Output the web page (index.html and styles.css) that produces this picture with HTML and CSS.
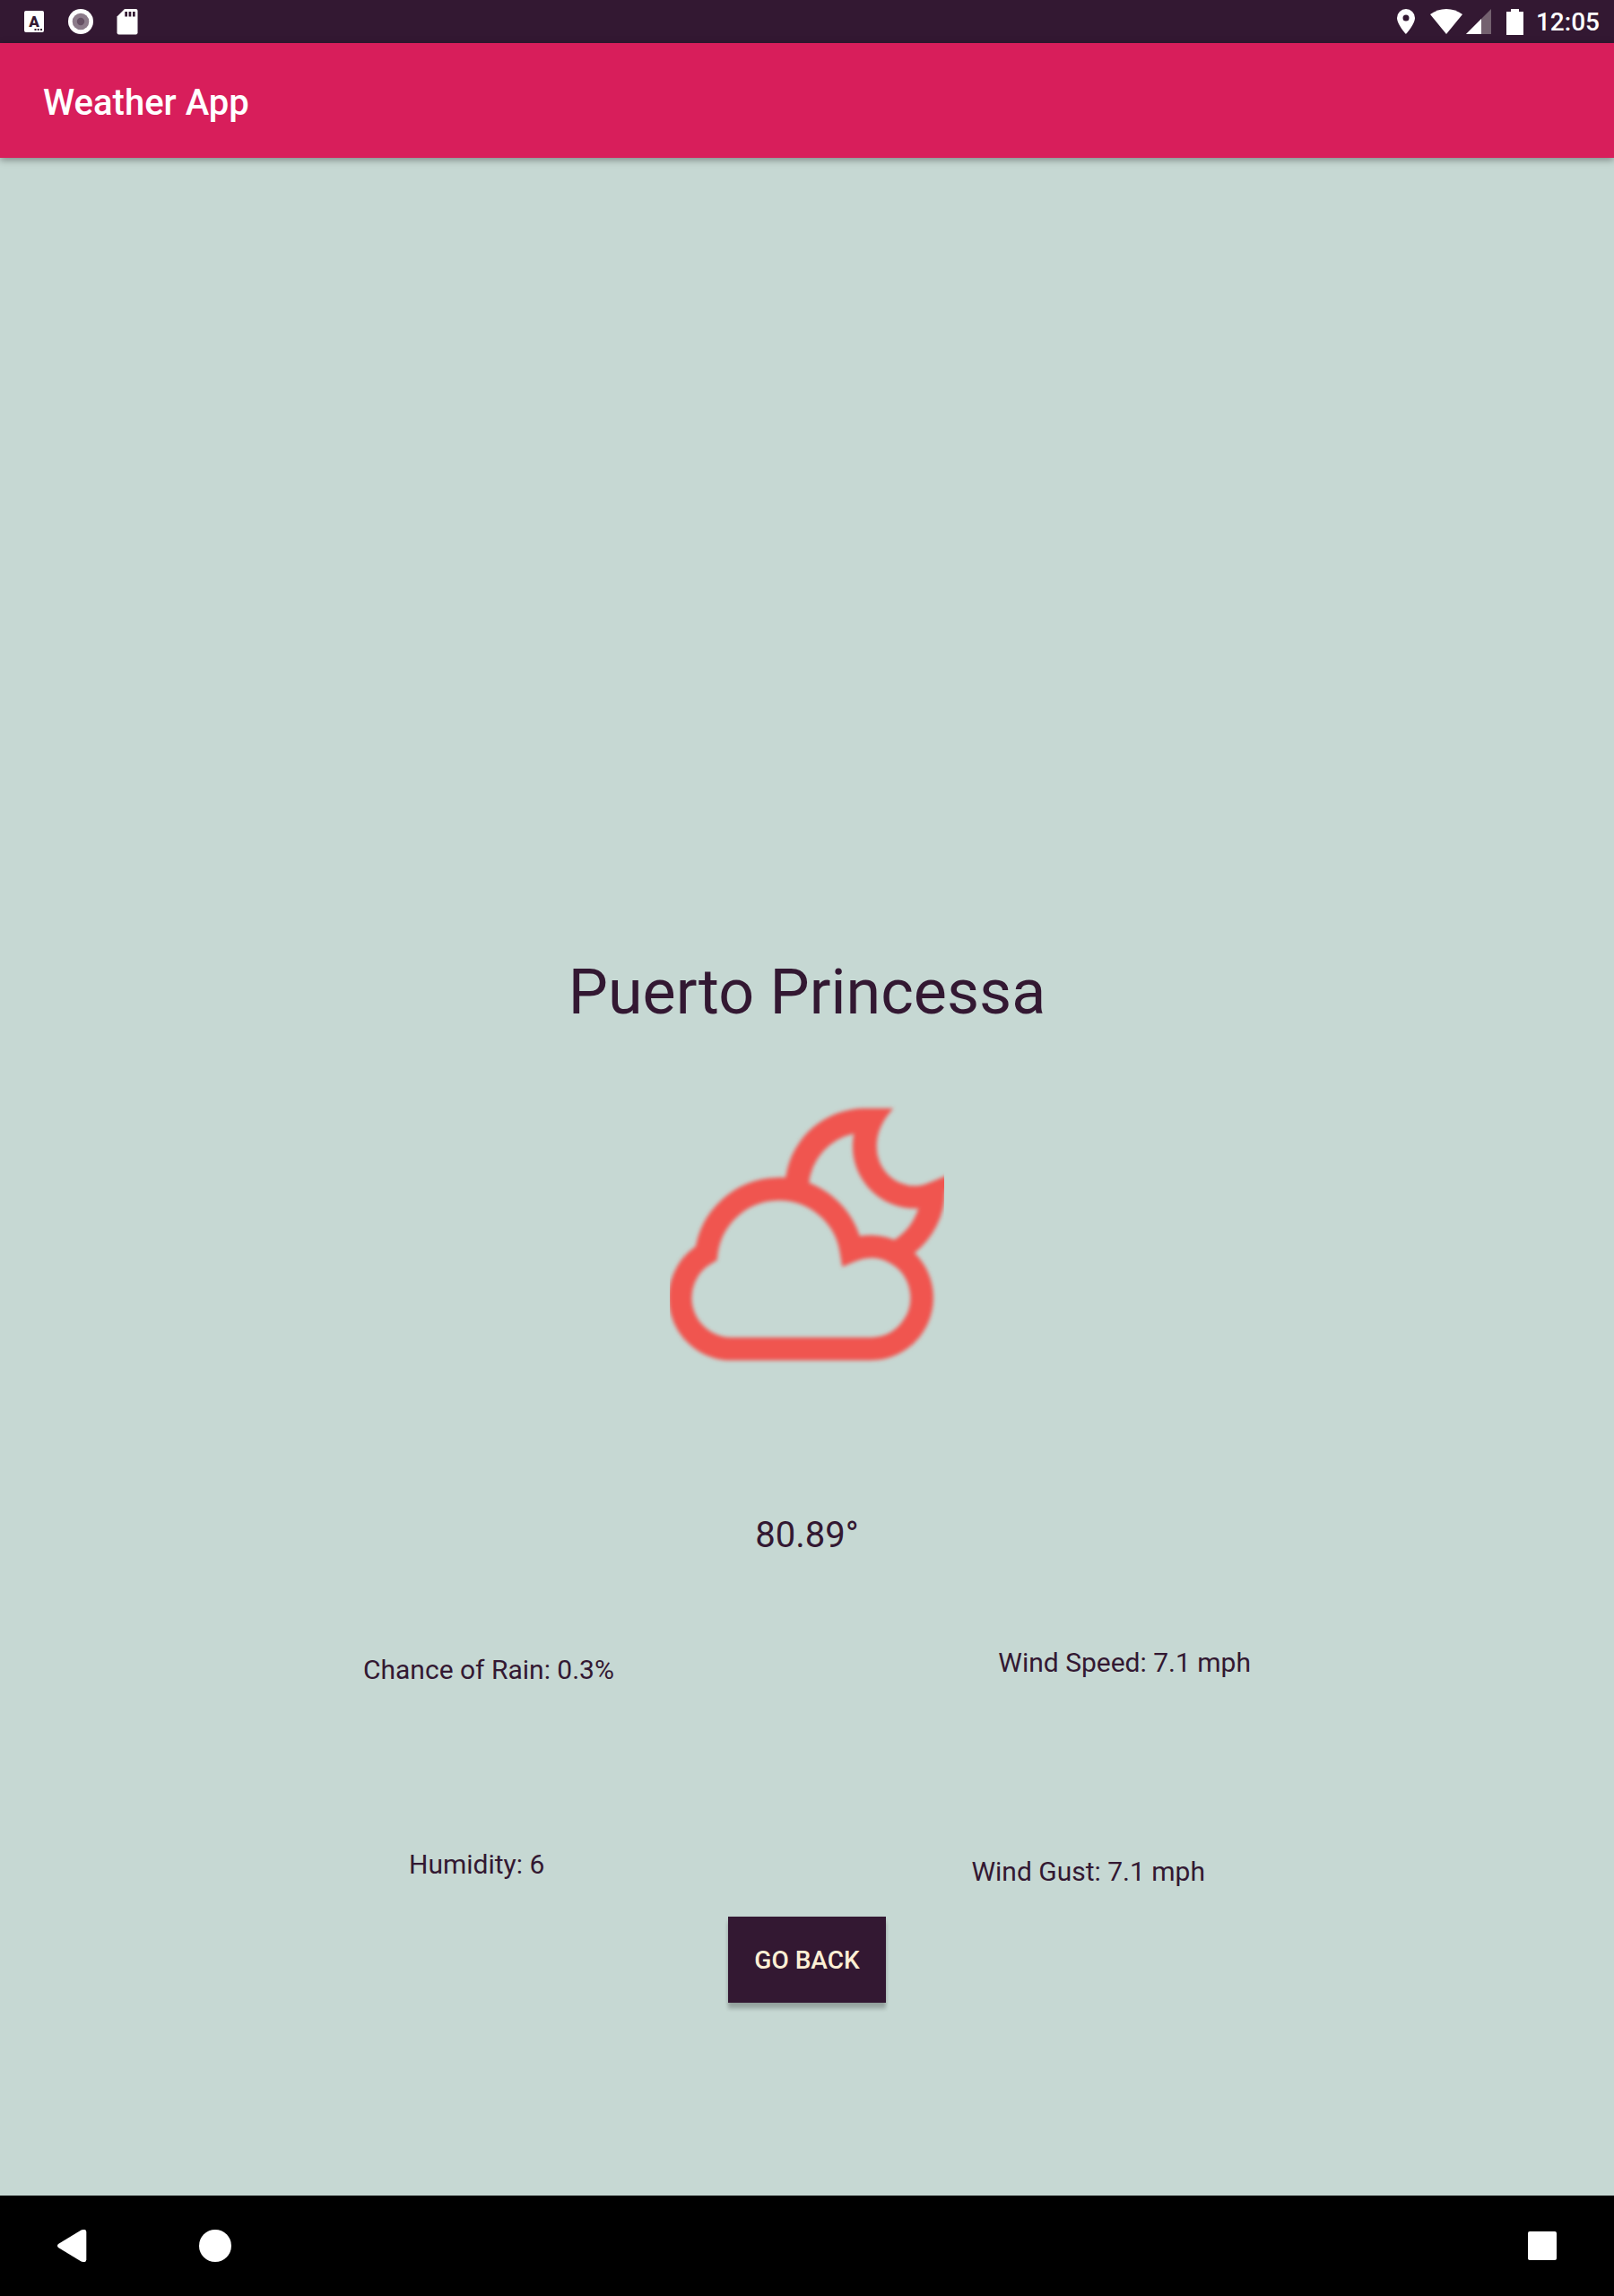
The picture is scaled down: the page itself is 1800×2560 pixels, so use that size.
FILE: index.html
```html
<!DOCTYPE html>
<html lang="en">
<head>
<meta charset="utf-8">
<meta name="viewport" content="width=device-width, initial-scale=1">
<title>Weather App</title>
<link rel="stylesheet" href="styles.css">
</head>
<body class="screen">
  <div class="status-bar">
    <div class="status-group status-notifications">
      <svg class="status-icon" width="28" height="28" viewBox="0 0 28 28" aria-hidden="true">
        <rect x="3" y="2" width="22" height="24" rx="2" fill="#fff"/>
        <text class="keyboard-letter" x="14" y="20" text-anchor="middle">A</text>
        <path d="M14.500 22h2v2h-2zM17.700 22h2v2h-2zM21 22h2v2h-2z" fill="#331832"/>
      </svg>
      <svg class="status-icon" width="28" height="28" viewBox="0 0 28 28" aria-hidden="true">
        <circle cx="14" cy="14" r="14" fill="#fff"/>
        <circle cx="14" cy="14" r="9.300" fill="#8c7b8a"/>
        <circle cx="14" cy="14" r="4.200" fill="#665064"/>
      </svg>
      <svg class="status-icon" width="28" height="30" viewBox="-2 0 28 30" aria-hidden="true">
        <path d="M9 1h12.500A2 2 0 0 1 23.500 3v24.500a2 2 0 0 1-2 2h-19a2 2 0 0 1-2-2V9.500z" fill="#fff"/>
        <path d="M9.300 4h2.700v5.500H9.300zM13.600 4h2.700v5.500h-2.700zM18 4h2.700v5.500H18z" fill="#331832"/>
      </svg>
    </div>
    <div class="status-group">
      <svg class="status-icon status-location" width="20" height="28" viewBox="0 0 20 28" aria-hidden="true">
        <path fill="#fff" fill-rule="evenodd" d="M10 0A10 10 0 0 0 0 10C0 17 10 28 10 28S20 17 20 10A10 10 0 0 0 10 0zM10 6.400a3.500 3.500 0 1 1 0 7 3.500 3.500 0 0 1 0-7z"/>
      </svg>
      <svg class="status-icon" width="36" height="28" viewBox="0 0 36 28" aria-hidden="true">
        <path fill="#fff" d="M18 28L0 6Q8 0 18 0T36 6z"/>
      </svg>
      <svg class="status-icon status-signal" width="28" height="28" viewBox="0 0 28 28" aria-hidden="true">
        <path fill="#74616f" d="M28 0V28H0z"/>
        <path fill="#fff" d="M17 11V28H0z"/>
      </svg>
      <svg class="status-icon status-battery" width="19" height="29" viewBox="0 0 19 29" aria-hidden="true">
        <path fill="#fff" d="M5 0h9v3h5v26H0V3h5z"/>
      </svg>
      <time class="clock">12:05</time>
    </div>
  </div>

  <header class="app-bar">
    <h1 class="app-title">Weather App</h1>
  </header>

  <main class="weather">
    <h2 class="city">Puerto Princessa</h2>
    <svg class="condition" viewBox="48 34 918 918" role="img" aria-label="Cloudy night">
      <defs>
        <filter id="soften"><feGaussianBlur stdDeviation="6"/></filter>
      </defs>
      <g filter="url(#soften)">
        <path fill="#f0544f" d="M430 330Q433 315 437 298A268 268 0 0 1 700 75H796C760 115 740 155 740 203A130 130 0 0 0 870 335C905 335 935 312 1000 292L969 355A268 268 0 0 1 868 558L820 560 800 515A195 195 0 0 0 880 410A208 208 0 0 1 664 160A190 190 0 0 0 513 330L480 350z"/>
        <path fill="none" stroke="#f0544f" stroke-width="77" d="M256 880H722A171 171 0 1 0 655 551A245 245 0 0 0 170 560A171 171 0 0 0 256 880z"/>
      </g>
    </svg>
    <p class="temperature">80.89°</p>
    <div class="stats stats-wide">
      <p class="stat stat-low">Chance of Rain: 0.3%</p>
      <p class="stat">Wind Speed: 7.1 mph</p>
    </div>
    <div class="stats stats-narrow">
      <p class="stat">Humidity: 6</p>
      <p class="stat stat-low">Wind Gust: 7.1 mph</p>
    </div>
    <button class="go-back" type="button">GO BACK</button>
  </main>

  <nav class="nav-bar" aria-label="System">
    <button class="nav-button" type="button" aria-label="Back">
      <svg width="36" height="36" viewBox="0 0 36 36" aria-hidden="true">
        <path fill="#fff" d="M3 16L28.500 .6Q34 -1.500 34.300 2.500V33.500Q34 37.500 28.500 35.400L3 20Q1 18 3 16z"/>
      </svg>
    </button>
    <button class="nav-button" type="button" aria-label="Home">
      <svg width="36" height="36" viewBox="0 0 36 36" aria-hidden="true"><circle cx="18" cy="18" r="18" fill="#fff"/></svg>
    </button>
    <button class="nav-button nav-recent" type="button" aria-label="Recent apps">
      <svg width="32" height="32" viewBox="0 0 32 32" aria-hidden="true"><rect width="32" height="32" rx="2" fill="#fff"/></svg>
    </button>
  </nav>
</body>
</html>
```
FILE: styles.css
```css
* {
  box-sizing: border-box;
}

.screen {
  display: flex;
  flex-direction: column;
  min-height: 100vh;
  margin: 0;
  background: #c6d8d3;
  color: #331832;
  font-family: Roboto, "Liberation Sans", sans-serif;
}

.status-bar {
  display: flex;
  justify-content: space-between;
  height: 48px;
  padding: 0 16px 0 24px;
  background: #331832;
  color: #fff;
}

.status-group {
  display: flex;
  align-items: center;
}

.status-notifications {
  gap: 24px;
}

.status-icon {
  display: block;
}

.keyboard-letter {
  fill: #331832;
  font-size: 17px;
  font-weight: 900;
}

.status-location {
  margin-right: 17px;
}

.status-signal {
  margin: 0 17px 0 4px;
}

.status-battery {
  margin-right: 14px;
}

.clock {
  padding-top: 2px;
  font-size: 28px;
  font-weight: 500;
  line-height: 32px;
}

.app-bar {
  display: flex;
  align-items: center;
  min-height: 128px;
  padding: 6px 48px 0;
  background: #d81e5b;
  color: #fff;
  box-shadow: 0 2px 8px rgba(0, 0, 0, 0.4);
}

.app-title {
  margin: 0;
  font-size: 40px;
  font-weight: 500;
  line-height: 48px;
}

.weather {
  display: flex;
  flex: 1;
  flex-direction: column;
  align-items: center;
  justify-content: flex-end;
  padding: 48px 24px 215px;
}

.city {
  margin: 0 0 75px;
  font-size: 70px;
  font-weight: 400;
  line-height: 82px;
}

.condition {
  display: block;
  width: 306px;
  height: 306px;
  margin-bottom: 160px;
}

.temperature {
  margin: 0 0 101px;
  font-size: 40px;
  line-height: 47px;
}

.stats {
  display: flex;
  justify-content: space-between;
  align-items: flex-start;
  width: 100%;
  min-height: 44px;
}

.stats-wide {
  max-width: 990px;
  margin-bottom: 181px;
}

.stats-narrow {
  max-width: 888px;
  margin-bottom: 32px;
}

.stat {
  margin: 0;
  font-size: 30px;
  line-height: 36px;
}

.stat-low {
  align-self: flex-end;
}

.go-back {
  min-width: 176px;
  min-height: 96px;
  padding: 2px 24px 0;
  border: 0;
  background: #331832;
  color: #fdf0d5;
  font: 500 28px/32px Roboto, "Liberation Sans", sans-serif;
  box-shadow: 0 7px 4px rgba(0, 0, 0, 0.2), 0 2px 4px rgba(0, 0, 0, 0.1);
}

.nav-bar {
  display: flex;
  height: 112px;
  background: #000;
}

.nav-button {
  display: flex;
  align-items: center;
  justify-content: center;
  width: 160px;
  padding: 0;
  border: 0;
  background: transparent;
}

.nav-recent {
  margin-left: auto;
}
```
